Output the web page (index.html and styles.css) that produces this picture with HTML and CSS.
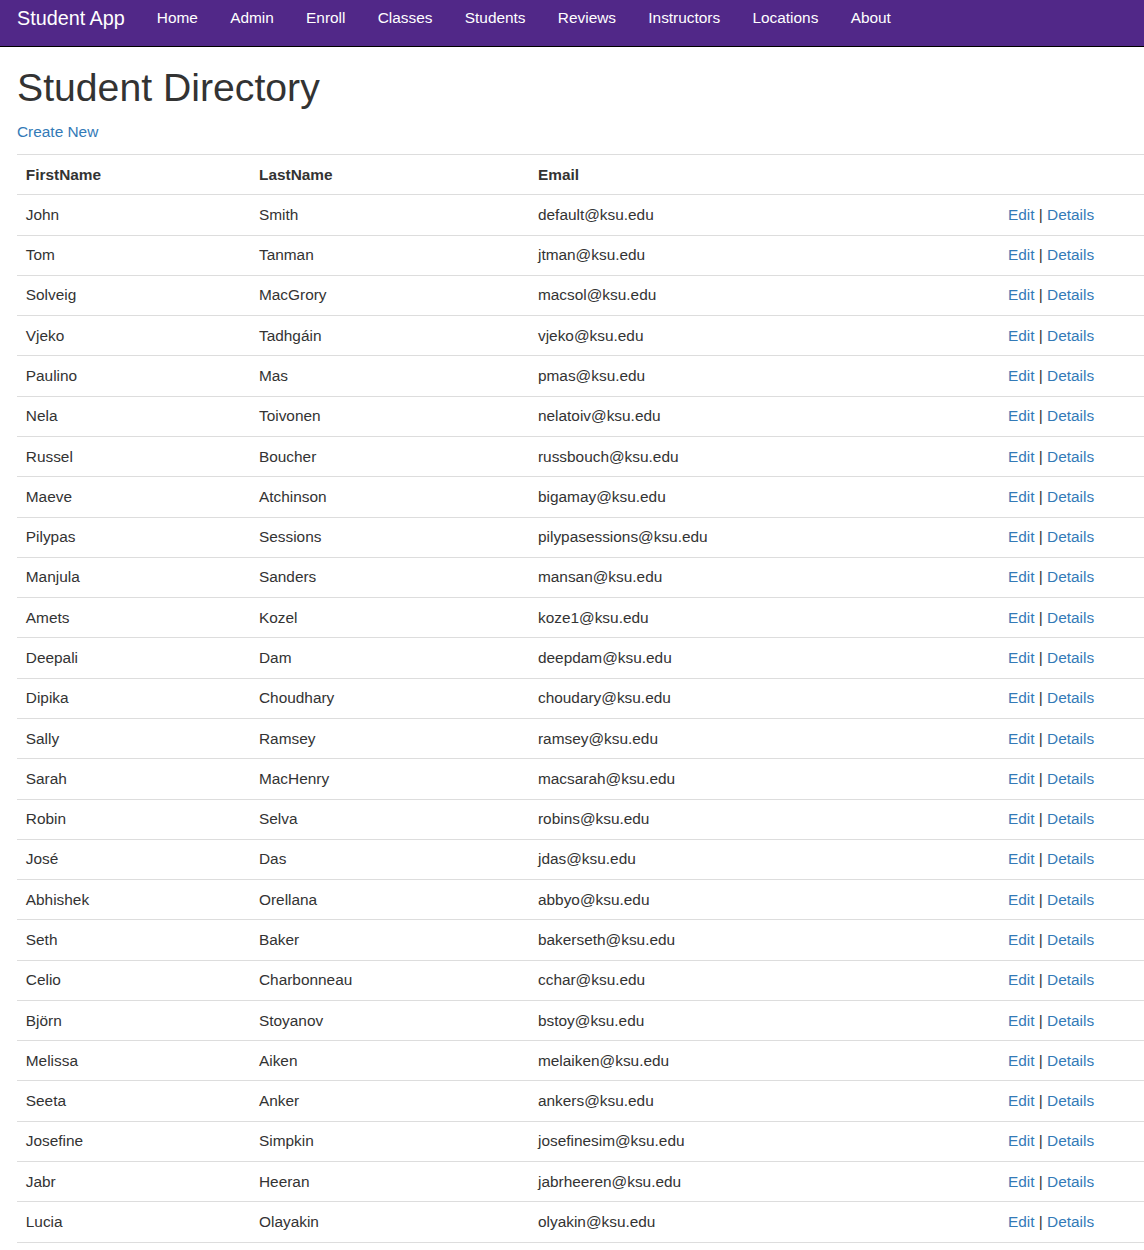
FILE: index.html
```html
<!DOCTYPE html>
<html lang="en">
<head>
<meta charset="utf-8">
<title>Student Directory - Student App</title>
<link rel="stylesheet" href="styles.css">
</head>
<body>
<nav class="navbar">
  <a class="brand" href="#">Student App</a>
  <ul class="nav-links">
    <li><a href="#">Home</a></li>
    <li><a href="#">Admin</a></li>
    <li><a href="#">Enroll</a></li>
    <li><a href="#">Classes</a></li>
    <li><a href="#">Students</a></li>
    <li><a href="#">Reviews</a></li>
    <li><a href="#">Instructors</a></li>
    <li><a href="#">Locations</a></li>
    <li><a href="#">About</a></li>
  </ul>
</nav>
<main class="container">
  <h1 class="title">Student Directory</h1>
  <p class="create"><a href="#">Create New</a></p>
  <table class="students">
    <colgroup>
      <col class="c1"><col class="c2"><col class="c3"><col class="c4">
    </colgroup>
    <thead>
      <tr><th>FirstName</th><th>LastName</th><th>Email</th><th></th></tr>
    </thead>
    <tbody>
      <tr><td>John</td><td>Smith</td><td>default@ksu.edu</td><td><a href="#">Edit</a> | <a href="#">Details</a></td></tr>
      <tr><td>Tom</td><td>Tanman</td><td>jtman@ksu.edu</td><td><a href="#">Edit</a> | <a href="#">Details</a></td></tr>
      <tr><td>Solveig</td><td>MacGrory</td><td>macsol@ksu.edu</td><td><a href="#">Edit</a> | <a href="#">Details</a></td></tr>
      <tr><td>Vjeko</td><td>Tadhgáin</td><td>vjeko@ksu.edu</td><td><a href="#">Edit</a> | <a href="#">Details</a></td></tr>
      <tr><td>Paulino</td><td>Mas</td><td>pmas@ksu.edu</td><td><a href="#">Edit</a> | <a href="#">Details</a></td></tr>
      <tr><td>Nela</td><td>Toivonen</td><td>nelatoiv@ksu.edu</td><td><a href="#">Edit</a> | <a href="#">Details</a></td></tr>
      <tr><td>Russel</td><td>Boucher</td><td>russbouch@ksu.edu</td><td><a href="#">Edit</a> | <a href="#">Details</a></td></tr>
      <tr><td>Maeve</td><td>Atchinson</td><td>bigamay@ksu.edu</td><td><a href="#">Edit</a> | <a href="#">Details</a></td></tr>
      <tr><td>Pilypas</td><td>Sessions</td><td>pilypasessions@ksu.edu</td><td><a href="#">Edit</a> | <a href="#">Details</a></td></tr>
      <tr><td>Manjula</td><td>Sanders</td><td>mansan@ksu.edu</td><td><a href="#">Edit</a> | <a href="#">Details</a></td></tr>
      <tr><td>Amets</td><td>Kozel</td><td>koze1@ksu.edu</td><td><a href="#">Edit</a> | <a href="#">Details</a></td></tr>
      <tr><td>Deepali</td><td>Dam</td><td>deepdam@ksu.edu</td><td><a href="#">Edit</a> | <a href="#">Details</a></td></tr>
      <tr><td>Dipika</td><td>Choudhary</td><td>choudary@ksu.edu</td><td><a href="#">Edit</a> | <a href="#">Details</a></td></tr>
      <tr><td>Sally</td><td>Ramsey</td><td>ramsey@ksu.edu</td><td><a href="#">Edit</a> | <a href="#">Details</a></td></tr>
      <tr><td>Sarah</td><td>MacHenry</td><td>macsarah@ksu.edu</td><td><a href="#">Edit</a> | <a href="#">Details</a></td></tr>
      <tr><td>Robin</td><td>Selva</td><td>robins@ksu.edu</td><td><a href="#">Edit</a> | <a href="#">Details</a></td></tr>
      <tr><td>José</td><td>Das</td><td>jdas@ksu.edu</td><td><a href="#">Edit</a> | <a href="#">Details</a></td></tr>
      <tr><td>Abhishek</td><td>Orellana</td><td>abbyo@ksu.edu</td><td><a href="#">Edit</a> | <a href="#">Details</a></td></tr>
      <tr><td>Seth</td><td>Baker</td><td>bakerseth@ksu.edu</td><td><a href="#">Edit</a> | <a href="#">Details</a></td></tr>
      <tr><td>Celio</td><td>Charbonneau</td><td>cchar@ksu.edu</td><td><a href="#">Edit</a> | <a href="#">Details</a></td></tr>
      <tr><td>Björn</td><td>Stoyanov</td><td>bstoy@ksu.edu</td><td><a href="#">Edit</a> | <a href="#">Details</a></td></tr>
      <tr><td>Melissa</td><td>Aiken</td><td>melaiken@ksu.edu</td><td><a href="#">Edit</a> | <a href="#">Details</a></td></tr>
      <tr><td>Seeta</td><td>Anker</td><td>ankers@ksu.edu</td><td><a href="#">Edit</a> | <a href="#">Details</a></td></tr>
      <tr><td>Josefine</td><td>Simpkin</td><td>josefinesim@ksu.edu</td><td><a href="#">Edit</a> | <a href="#">Details</a></td></tr>
      <tr><td>Jabr</td><td>Heeran</td><td>jabrheeren@ksu.edu</td><td><a href="#">Edit</a> | <a href="#">Details</a></td></tr>
      <tr><td>Lucia</td><td>Olayakin</td><td>olyakin@ksu.edu</td><td><a href="#">Edit</a> | <a href="#">Details</a></td></tr>
    </tbody>
  </table>
</main>
</body>
</html>
```

FILE: styles.css
```css
html, body {
  margin: 0;
  padding: 0;
  background: #fff;
}

body {
  font-family: "Liberation Sans", Arial, Helvetica, sans-serif;
  font-size: 15.4px;
  line-height: 22px;
  color: #333;
}

a {
  color: #337ab7;
  text-decoration: none;
}

.navbar {
  display: flex;
  align-items: flex-start;
  box-sizing: border-box;
  height: 47px;
  padding: 7px 0 0 17px;
  background: #512888;
  border-bottom: 1px solid #000;
}

.brand {
  color: #fff;
  font-size: 19.8px;
  line-height: 22px;
  margin-right: 32px;
}

.nav-links {
  display: flex;
  gap: 32.3px;
  list-style: none;
  margin: 0;
  padding: 0;
}

.nav-links a {
  color: #fff;
  font-size: 15.4px;
  line-height: 22px;
  display: block;
}

.container {
  padding: 0 0 0 17px;
}

.title {
  font-size: 39.2px;
  font-weight: 500;
  line-height: 44px;
  margin: 19px 0 11px;
  color: #333;
}

.create {
  margin: 0 0 11px;
}

.students {
  width: 100%;
  border-collapse: collapse;
  table-layout: fixed;
  border-bottom: 1px solid #ddd;
}

.c1 { width: 233.2px; }
.c2 { width: 279px; }
.c3 { width: 470px; }

.students th,
.students td {
  text-align: left;
  padding: 8.65px 8.8px;
  line-height: 22px;
  border-top: 1px solid #ddd;
  vertical-align: top;
}

.students th {
  font-weight: bold;
  padding-top: 9.2px;
  padding-bottom: 8.1px;
}
```
